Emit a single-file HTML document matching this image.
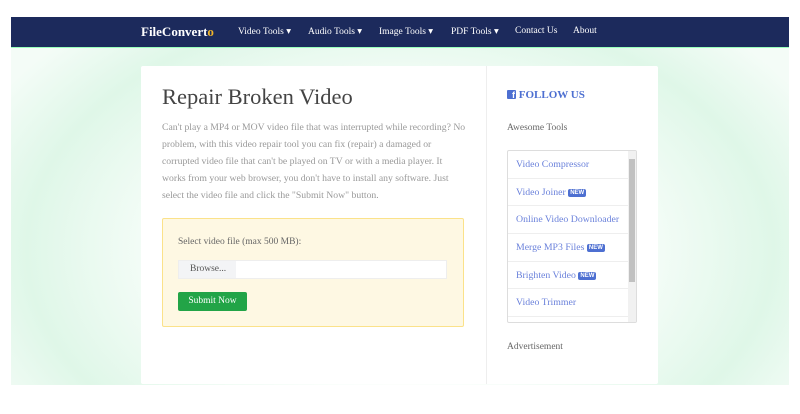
<!DOCTYPE html>
<html><head><style>
*{margin:0;padding:0;box-sizing:border-box}
body{width:800px;height:414px;background:#fff;font-family:"Liberation Serif",serif;position:relative;overflow:hidden}
.nav{position:absolute;left:11px;top:17px;width:778px;height:31px;background:#1c2a5c;border-bottom:1px solid #9fb;}
.nav .logo{position:absolute;left:130px;top:7px;color:#fff;font-weight:bold;font-size:13px}
.nav .logo span{color:#f0b429}
.nav a{position:absolute;top:9px;color:#fff;font-size:9.5px}
.bg{position:absolute;left:11px;top:48px;width:778px;height:337px;background:radial-gradient(ellipse 60% 90% at 50% 60%,#fff 40%,#dff7e8 80%,#f4fcf7 100%)}
.card{position:absolute;left:141px;top:66px;width:517px;height:318px;background:#fff;border-radius:2px}
.div{position:absolute;left:486px;top:66px;width:1px;height:318px;background:#eee}
h1{position:absolute;left:162px;top:84px;font-weight:normal;font-size:22.5px;color:#444}
p.d{position:absolute;left:162px;top:119px;font-size:9.7px;line-height:17px;color:#999;white-space:nowrap}
.yb{position:absolute;left:162px;top:218px;width:302px;height:109px;background:#fef8e3;border:1.5px solid #fbe28a;border-radius:2px}
.lbl{position:absolute;left:178px;top:237px;font-size:9.5px;color:#666}
.inp{position:absolute;left:178px;top:260px;width:269px;height:19px;background:#fff;border:1px solid #eee}
.inp span{display:block;width:57px;height:17px;background:#f3f4f6;font-size:9.5px;color:#555;padding:3px 0 0 11px}
.btn{position:absolute;left:178px;top:292px;width:69px;height:19px;background:#22a447;border-radius:2px;color:#fff;font-size:9.5px;text-align:center;line-height:19px}
.fu{position:absolute;left:507px;top:89px;color:#4d6fd1;font-weight:bold;font-size:11px}
.fb{display:inline-block;width:9px;height:9px;background:#4d6fd1;border-radius:1px;vertical-align:-1px;color:#fff;font-size:9px;line-height:11px;text-align:right;font-family:"Liberation Sans",sans-serif;overflow:hidden;padding-right:1px}
.aw{position:absolute;left:507px;top:123px;font-size:9.5px;color:#666}
.list{position:absolute;left:507px;top:150px;width:130px;height:173px;border:1px solid #ddd;border-radius:2px;overflow:hidden;background:#fff}
.list div.i{height:27.7px;border-bottom:1px solid #eee;color:#6b82db;font-size:9.8px;padding:8px 0 0 8px;width:121px;white-space:nowrap}
.new{display:inline-block;background:#4d6fd1;color:#fff;font-size:6px;font-weight:bold;padding:1px 2px;border-radius:2px;vertical-align:1px;font-family:"Liberation Sans",sans-serif}
.sb{position:absolute;right:0;top:0;width:8px;height:100%;background:#f1f1f1}
.sb i{position:absolute;left:1px;top:8px;width:6px;height:123px;background:#c1c1c1}
.ad{position:absolute;left:507px;top:342px;font-size:9.5px;color:#666}
</style></head><body>
<div class="nav"><div class="logo">FileConvert<span>o</span></div>
<a style="left:227px">Video Tools ▾</a><a style="left:297px">Audio Tools ▾</a><a style="left:368px">Image Tools ▾</a><a style="left:440px">PDF Tools ▾</a><a style="left:504px">Contact Us</a><a style="left:562px">About</a></div>
<div class="bg"></div>
<div class="card"></div><div class="div"></div>
<h1>Repair Broken Video</h1>
<p class="d">Can't play a MP4 or MOV video file that was interrupted while recording? No<br>problem, with this video repair tool you can fix (repair) a damaged or<br>corrupted video file that can't be played on TV or with a media player. It<br>works from your web browser, you don't have to install any software. Just<br>select the video file and click the "Submit Now" button.</p>
<div class="yb"></div>
<div class="lbl">Select video file (max 500 MB):</div>
<div class="inp"><span>Browse...</span></div>
<div class="btn">Submit Now</div>
<div class="fu"><span class="fb">f</span> FOLLOW US</div>
<div class="aw">Awesome Tools</div>
<div class="list">
<div class="i">Video Compressor</div>
<div class="i">Video Joiner <span class="new">NEW</span></div>
<div class="i">Online Video Downloader</div>
<div class="i">Merge MP3 Files <span class="new">NEW</span></div>
<div class="i">Brighten Video <span class="new">NEW</span></div>
<div class="i">Video Trimmer</div>
<div class="sb"><i></i></div>
</div>
<div class="ad">Advertisement</div>
</body></html>
